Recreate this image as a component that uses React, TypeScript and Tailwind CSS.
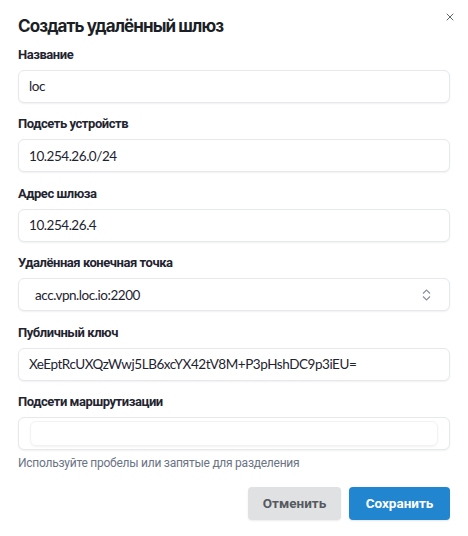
import { X } from "lucide-react";

const inter = "font-['Inter','Noto_Sans',sans-serif]";
const lato = "font-['Lato','Inter',sans-serif]";
const roboto = "font-['Roboto','Liberation_Sans',sans-serif]";

function Label({ children }: { children: React.ReactNode }) {
  return (
    <div className={`${roboto} text-[13px] font-bold leading-[18px] tracking-[-0.45px] text-[#1f2430] mb-[6px]`}>
      {children}
    </div>
  );
}

function TextInput({ value }: { value: string }) {
  return (
    <div
      className={`${lato} h-[33px] flex items-center px-[10px] rounded-[6px] border border-[#e6e8ec] bg-white shadow-[0_1px_2px_rgba(15,23,42,0.06)] text-[13.5px] tracking-[-0.45px] text-[#1e2330]`}
    >
      {value}
    </div>
  );
}

function SelectInput({ value }: { value: string }) {
  return (
    <div
      className={`${lato} h-[33px] flex items-center justify-between pl-[16px] pr-[18px] rounded-[6px] border border-[#e6e8ec] bg-white shadow-[0_1px_2px_rgba(15,23,42,0.06)] text-[13.5px] tracking-[-0.45px] text-[#1e2330]`}
    >
      <span>{value}</span>
      <svg width="9" height="12" viewBox="0 0 9 12" fill="none" stroke="#8b919c" strokeWidth="1.2">
        <path d="M1 4.5 L4.5 1 L8 4.5" />
        <path d="M1 7.5 L4.5 11 L8 7.5" />
      </svg>
    </div>
  );
}

export default function App() {
  return (
    <div className="w-[468px] h-[536px] bg-white relative">
      <button className="absolute left-[444px] top-[11px] text-[#5f6573]">
        <X className="w-[12px] h-[12px]" strokeWidth={2} />
      </button>
      <div className="px-[18px] pt-[14px]">
        <h2 className={`${inter} text-[17px] font-bold leading-[24px] text-[#1c1f26] tracking-[-0.9px]`}>
          Создать удалённый шлюз
        </h2>

        <div className="mt-[8px] flex flex-col gap-[12.4px]">
          <div>
            <Label>Название</Label>
            <TextInput value="loc" />
          </div>
          <div>
            <Label>Подсеть устройств</Label>
            <TextInput value="10.254.26.0/24" />
          </div>
          <div>
            <Label>Адрес шлюза</Label>
            <TextInput value="10.254.26.4" />
          </div>
          <div>
            <Label>Удалённая конечная точка</Label>
            <SelectInput value="acc.vpn.loc.io:2200" />
          </div>
          <div>
            <Label>Публичный ключ</Label>
            <TextInput value="XeEptRcUXQzWwj5LB6xcYX42tV8M+P3pHshDC9p3iEU=" />
          </div>
          <div>
            <Label>Подсети маршрутизации</Label>
            <div className="h-[33px] flex items-center px-[11px] rounded-[6px] border border-[#e6e8ec] bg-white shadow-[0_1px_2px_rgba(15,23,42,0.06)]">
              <div className="h-[25px] w-full rounded-[6px] border border-[#f1f2f4] shadow-[0_1px_2px_rgba(15,23,42,0.05)]" />
            </div>
            <div className={`${roboto} mt-[4px] text-[12px] leading-[18px] tracking-[-0.25px] text-[#6b7384]`}>
              Используйте пробелы или запятые для разделения
            </div>
          </div>
        </div>

        <div className="mt-[15px] flex justify-end gap-[8px]">
          <button
            className={`${roboto} h-[33px] w-[93px] rounded-[4px] bg-[#e0e1e2] text-[13.5px] font-bold text-[#555a60] shadow-[0_1px_2px_rgba(0,0,0,0.08)]`}
          >
            Отменить
          </button>
          <button
            className={`${roboto} h-[33px] w-[101px] rounded-[4px] bg-[#2185d0] text-[13.5px] font-bold text-white shadow-[0_1px_2px_rgba(0,0,0,0.1)]`}
          >
            Сохранить
          </button>
        </div>
      </div>
    </div>
  );
}
